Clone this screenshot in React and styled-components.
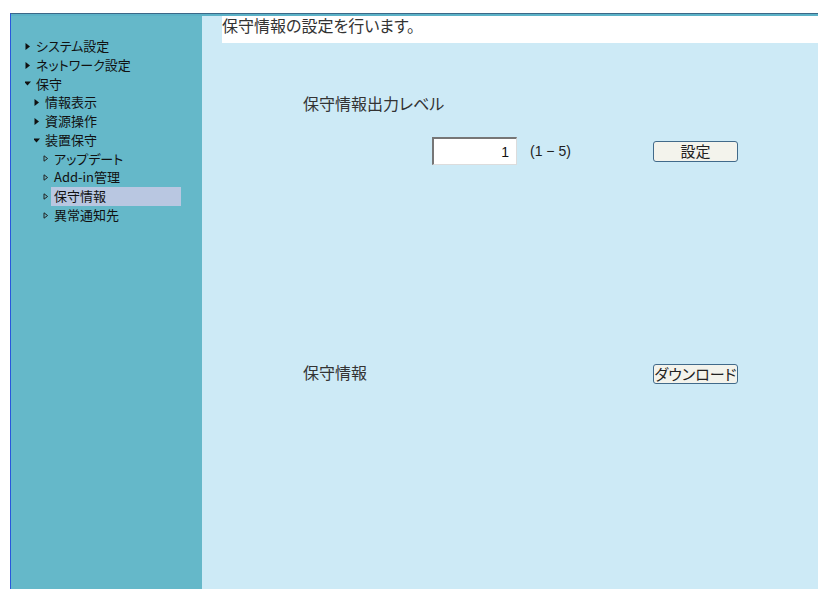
import styled, { createGlobalStyle } from 'styled-components'

const GlobalStyle = createGlobalStyle`
    html, body {
        margin: 0;
        padding: 0;
        background: #FFF;
        font-family: "Noto Sans CJK JP", "Noto Sans", sans-serif;
    }
`

const Page = styled.div`
    padding: 13px 0 0 10px;
    height: 589px;
    box-sizing: border-box;
`

const Frame = styled.div`
    display: flex;
    flex-direction: column;
    height: 100%;
    border-left: 1px solid #2a56dc;
    border-top: 1px solid #3b6888;
`

const TopStripe = styled.div`
    height: 2px;
    background: #5cb2c7;
`

const Body = styled.div`
    flex: 1;
    display: flex;
`

const Sidebar = styled.nav`
    width: 191px;
    background: #65b8c9;
    padding-top: 21px;
    box-sizing: border-box;
`

const Item = styled.div`
    display: flex;
    align-items: center;
    height: 18.75px;
    padding-left: ${props => 14 + props.level * 9}px;
    font-size: 13px;
    color: #111;
    font-feature-settings: "palt";
`

const Arrow = styled.svg`
    width: 8px;
    height: 7px;
    flex-shrink: 0;
`

const Label = styled.span`
    display: block;
    padding: 0 3px;
    line-height: 18.75px;
    width: ${props => props.active ? '124px' : 'auto'};
    background: ${props => props.active ? '#b9c7e1' : 'transparent'};
`

const Content = styled.main`
    flex: 1;
    background: #cdeaf6;
    color: #333;
    font-feature-settings: "palt";
`

const Header = styled.div`
    margin-left: 20px;
    height: 27px;
    background: #FFF;
    font-size: 16px;
    line-height: 19px;
`

const Form = styled.div`
    display: grid;
    grid-template-columns: 129px 85px 136px 85px;
    align-items: center;
    padding-left: 101px;
    margin-top: 50px;
`

const SectionLabel = styled.div`
    grid-column: 1 / 5;
    font-size: 16px;
    line-height: 20px;
`

const RowLabel = styled.div`
    grid-column: 1 / 4;
    font-size: 16px;
    line-height: 20px;
    margin-top: ${props => props.top || 0}px;
`

const LevelInput = styled.input`
    grid-column: 2;
    width: 85px;
    height: 28px;
    margin: 24px 0 0;
    box-sizing: border-box;
    border-style: solid;
    border-width: 2px 1px 1px 2px;
    border-color: #767676 #dcdcdc #dcdcdc #767676;
    background: #FFF;
    text-align: right;
    padding: 0 7px 0 0;
    font-family: "Liberation Sans", sans-serif;
    font-size: 14px;
    color: #111;
    outline: none;
`

const Range = styled.span`
    grid-column: 3;
    margin-top: 24px;
    padding-left: 13px;
    font-family: "Liberation Sans", sans-serif;
    font-size: 14px;
    color: #222;
`

const Button = styled.button`
    grid-column: 4;
    width: 85px;
    height: ${props => props.tall ? 21 : 20}px;
    margin-top: ${props => props.top || 0}px;
    padding: 0;
    box-sizing: border-box;
    border: 1px solid #416a8a;
    border-radius: 3px;
    background: #f3f3ec;
    font-family: "Noto Sans CJK JP", sans-serif;
    font-feature-settings: "palt";
    font-size: 15px;
    line-height: 18px;
    color: #222;
    white-space: nowrap;
    overflow: hidden;
`

const menu = [
    { level: 0, icon: 'closed', label: 'システム設定' },
    { level: 0, icon: 'closed', label: 'ネットワーク設定' },
    { level: 0, icon: 'open', label: '保守' },
    { level: 1, icon: 'closed', label: '情報表示' },
    { level: 1, icon: 'closed', label: '資源操作' },
    { level: 1, icon: 'open', label: '装置保守' },
    { level: 2, icon: 'leaf', label: 'アップデート' },
    { level: 2, icon: 'leaf', label: 'Add-in管理' },
    { level: 2, icon: 'leaf', label: '保守情報', active: true },
    { level: 2, icon: 'leaf', label: '異常通知先' },
]

function ArrowIcon({ type }) {
    return (
        <Arrow viewBox="0 0 8 7">
            {type === 'closed' && <polygon points="0.5,0 5,3.5 0.5,7" fill="#111" />}
            {type === 'open' && <polygon points="-1,1.5 6,1.5 2.5,5.5" fill="#111" />}
            {type === 'leaf' && (
                <polygon points="1,0.8 4.6,3.5 1,6.2" fill="none" stroke="#222" strokeWidth="1" />
            )}
        </Arrow>
    )
}

function App() {
    return (
        <Page>
            <GlobalStyle />
            <Frame>
                <TopStripe />
                <Body>
                    <Sidebar>
                        {menu.map(item => (
                            <Item key={item.label} level={item.level}>
                                <ArrowIcon type={item.icon} />
                                <Label active={item.active}>{item.label}</Label>
                            </Item>
                        ))}
                    </Sidebar>
                    <Content>
                        <Header>保守情報の設定を行います。</Header>
                        <Form>
                            <SectionLabel>保守情報出力レベル</SectionLabel>
                            <LevelInput defaultValue="1" />
                            <Range>(1 − 5)</Range>
                            <Button tall top={24}>設定</Button>
                            <RowLabel top={195}>保守情報</RowLabel>
                            <Button top={199}>ダウンロード</Button>
                        </Form>
                    </Content>
                </Body>
            </Frame>
        </Page>
    )
}

export default App
